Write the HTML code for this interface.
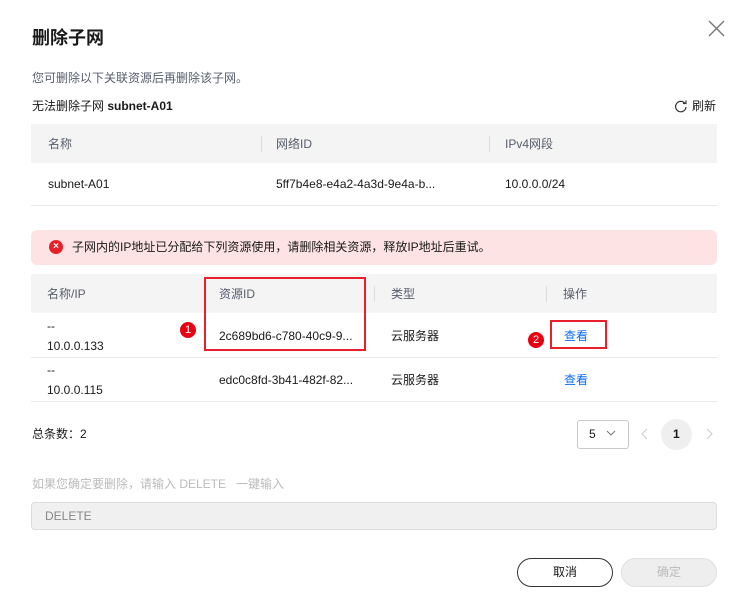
<!DOCTYPE html>
<html><head><meta charset="utf-8"><style>
*{margin:0;padding:0;box-sizing:border-box}
body{width:747px;height:616px;background:#fff;position:relative;font-family:"Liberation Sans","Noto Sans CJK SC",sans-serif;font-size:12px;color:#191919;overflow:hidden}
.a{position:absolute;white-space:nowrap;line-height:1}
.hd{position:absolute;left:31px;width:686px;background:#f4f4f4}
.sep{position:absolute;width:1px;height:16px;background:#dcdcdc}
.line{position:absolute;left:31px;width:686px;height:1px;background:#e8e8e8}
.g{color:#575d6c}
.badge{position:absolute;width:16px;height:16px;border-radius:50%;background:#e60012;color:#fff;font-size:11px;text-align:center;line-height:16px}
.rb{position:absolute;border:2px solid #e8202a}
.blue{color:#0a6cf3}
</style></head><body>
<div class="a" style="left:32px;top:29px;font-size:18px;font-weight:bold">删除子网</div>
<svg class="a" style="left:708px;top:20px" width="17" height="17" viewBox="0 0 17 17"><path d="M1 1L16 16M16 1L1 16" stroke="#777" stroke-width="1.4"/></svg>
<div class="a g" style="left:32px;top:72px">您可删除以下关联资源后再删除该子网。</div>
<div class="a" style="left:32px;top:100px">无法删除子网 <b>subnet-A01</b></div>
<svg class="a" style="left:674px;top:99px" width="14" height="14" viewBox="0 0 14 14"><path d="M11 4.5A5.2 5.2 0 1 0 12 8" fill="none" stroke="#333" stroke-width="1.2"/><path d="M9 4.5h3v-3" fill="none" stroke="#333" stroke-width="1.2"/></svg>
<div class="a" style="left:692px;top:100px">刷新</div>

<div class="hd" style="top:124px;height:39px"></div>
<div class="sep" style="left:261px;top:136px"></div><div class="sep" style="left:489px;top:136px"></div>
<div class="a g" style="left:48px;top:138px">名称</div>
<div class="a g" style="left:276px;top:138px">网络ID</div>
<div class="a g" style="left:505px;top:138px">IPv4网段</div>
<div class="a" style="left:48px;top:178px">subnet-A01</div>
<div class="a" style="left:276px;top:178px">5ff7b4e8-e4a2-4a3d-9e4a-b...</div>
<div class="a" style="left:505px;top:178px">10.0.0.0/24</div>
<div class="line" style="top:205px"></div>

<div class="a" style="left:31px;top:230px;width:686px;height:35px;background:#fde3e3;border-radius:6px"></div>
<div class="a" style="left:49px;top:240px;width:14px;height:14px;border-radius:50%;background:#e8202a;color:#fff;font-size:10px;text-align:center;line-height:14px;font-weight:bold">×</div>
<div class="a" style="left:72px;top:241px">子网内的IP地址已分配给下列资源使用，请删除相关资源，释放IP地址后重试。</div>

<div class="hd" style="top:274px;height:39px"></div>
<div class="sep" style="left:374px;top:286px"></div><div class="sep" style="left:546px;top:286px"></div>
<div class="a g" style="left:47px;top:288px">名称/IP</div>
<div class="a g" style="left:219px;top:288px">资源ID</div>
<div class="a g" style="left:391px;top:288px">类型</div>
<div class="a g" style="left:563px;top:288px">操作</div>
<div class="a" style="left:47px;top:320px">--</div>
<div class="a" style="left:47px;top:340px">10.0.0.133</div>
<div class="a" style="left:219px;top:330px">2c689bd6-c780-40c9-9...</div>
<div class="a" style="left:391px;top:330px">云服务器</div>
<div class="a blue" style="left:564px;top:330px">查看</div>
<div class="line" style="top:357px"></div>
<div class="a" style="left:47px;top:364px">--</div>
<div class="a" style="left:47px;top:384px">10.0.0.115</div>
<div class="a" style="left:219px;top:374px">edc0c8fd-3b41-482f-82...</div>
<div class="a" style="left:391px;top:374px">云服务器</div>
<div class="a blue" style="left:564px;top:374px">查看</div>
<div class="line" style="top:401px"></div>
<div class="rb" style="left:204px;top:277px;width:162px;height:74px"></div>
<div class="rb" style="left:550px;top:320px;width:57px;height:29px"></div>
<div class="badge" style="left:180px;top:322px">1</div>
<div class="badge" style="left:528px;top:332px">2</div>

<div class="a" style="left:32px;top:428px">总条数：2</div>
<div class="a" style="left:577px;top:420px;width:52px;height:29px;border:1px solid #c8c8c8;border-radius:3px"></div>
<div class="a" style="left:589px;top:428px">5</div>
<svg class="a" style="left:606px;top:430px" width="10" height="7" viewBox="0 0 10 7"><path d="M1 1l4 4 4-4" fill="none" stroke="#777"/></svg>
<svg class="a" style="left:641px;top:428px" width="7" height="12" viewBox="0 0 7 12"><path d="M6 1L1 6l5 5" fill="none" stroke="#ccc"/></svg>
<div class="a" style="left:661px;top:419px;width:31px;height:31px;border-radius:50%;background:#efefef"></div>
<div class="a" style="left:673px;top:428px;font-weight:bold">1</div>
<svg class="a" style="left:706px;top:428px" width="7" height="12" viewBox="0 0 7 12"><path d="M1 1l5 5-5 5" fill="none" stroke="#ccc"/></svg>

<div class="a" style="left:32px;top:478px;color:#bbb">如果您确定要删除，请输入 DELETE &nbsp;&nbsp;一键输入</div>
<div class="a" style="left:31px;top:502px;width:686px;height:28px;background:#f0f0f0;border:1px solid #dcdcdc;border-radius:4px"></div>
<div class="a" style="left:45px;top:510px;color:#888">DELETE</div>

<div class="a" style="left:517px;top:558px;width:96px;height:29px;border:1px solid #333;border-radius:15px;text-align:center;line-height:27px">取消</div>
<div class="a" style="left:621px;top:558px;width:96px;height:29px;border:1px solid #e0e0e0;background:#eee;border-radius:15px;text-align:center;line-height:27px;color:#bbb">确定</div>
</body></html>
